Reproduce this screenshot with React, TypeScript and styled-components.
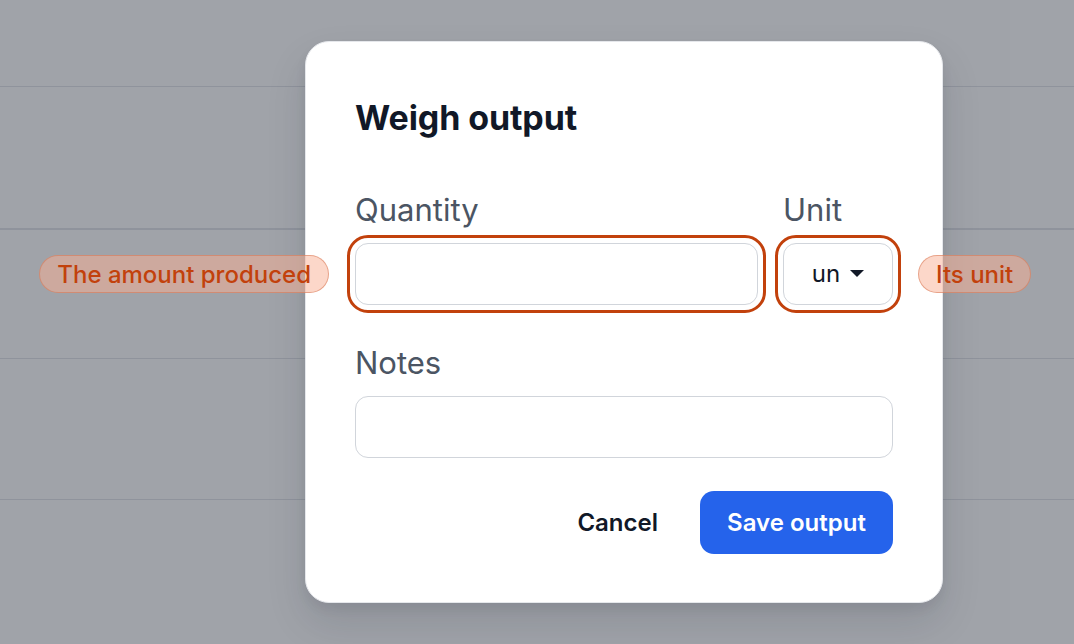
import React from "react";
import styled, { createGlobalStyle } from "styled-components";

const GlobalStyle = createGlobalStyle`
  html, body {
    margin: 0;
    padding: 0;
    background: #ffffff;
  }
  body {
    font-family: Inter, "Noto Sans", sans-serif;
    -webkit-font-smoothing: antialiased;
  }
  * { box-sizing: border-box; }
`;

const Page = styled.div`
  position: relative;
  width: 1074px;
  height: 644px;
  overflow: hidden;
  background: #ffffff;
`;

const BackgroundList = styled.div`
  display: flex;
  flex-direction: column;
`;

const BackgroundRow = styled.div<{ $h: number; $strong?: boolean }>`
  height: ${(p) => p.$h}px;
  border-bottom: ${(p) => (p.$strong ? "2px" : "1px")} solid #e3e5e9;
`;

const Overlay = styled.div`
  position: absolute;
  inset: 0;
  background: rgba(17, 24, 39, 0.4);
  display: flex;
  align-items: center;
  padding-left: 305px;
`;

const Dialog = styled.div`
  width: 638px;
  height: 562px;
  background: #ffffff;
  border: 1px solid #e5e7eb;
  border-radius: 24px;
  box-shadow: 0 20px 40px rgba(17, 24, 39, 0.12), 0 6px 12px rgba(17, 24, 39, 0.06);
  padding: 54px 49px 0;
  display: flex;
  flex-direction: column;
`;

const Title = styled.h2`
  margin: 0;
  font-size: 34px;
  line-height: 44px;
  font-weight: 700;
  color: #111827;
  letter-spacing: -0.1px;
`;

const FieldRow = styled.div`
  display: grid;
  grid-template-columns: 1fr 110px;
  column-gap: 25px;
  margin-top: 53px;
`;

const Field = styled.div`
  display: flex;
  flex-direction: column;
`;

const Label = styled.label`
  font-size: 31px;
  line-height: 34px;
  color: #4b5563;
  font-weight: 400;
  margin-bottom: 16px;
`;

const Anchor = styled.div`
  position: relative;
`;

const TextInput = styled.div<{ $marked?: boolean }>`
  height: 62px;
  width: 100%;
  border: 1.5px solid #d1d5db;
  border-radius: 13px;
  background: #ffffff;
  outline: ${(p) => (p.$marked ? "3px solid #c2410c" : "none")};
  outline-offset: 5px;
`;

const SelectBox = styled(TextInput)`
  display: flex;
  align-items: center;
  justify-content: center;
  gap: 10px;
  font-size: 24px;
  color: #111827;
  padding-bottom: 2px;
`;

const Caret = styled.svg`
  width: 14px;
  height: 8px;
  margin-top: 2px;
`;

const Tag = styled.span<{ $side: "left" | "right" }>`
  position: absolute;
  top: 50%;
  transform: translateY(-50%);
  ${(p) => (p.$side === "left" ? "right: calc(100% + 26px);" : "left: calc(100% + 25px);")}
  height: 38px;
  padding: 0 17px;
  display: flex;
  align-items: center;
  white-space: nowrap;
  border-radius: 19px;
  background: rgba(250, 175, 148, 0.5);
  border: 1.5px solid rgba(214, 110, 72, 0.5);
  color: #c2410c;
  font-size: 24px;
  font-weight: 500;
`;

const NotesField = styled(Field)`
  margin-top: 41px;
`;

const Actions = styled.div`
  display: flex;
  justify-content: flex-end;
  align-items: center;
  gap: 42px;
  margin-top: 33px;
`;

const GhostButton = styled.button`
  border: none;
  background: transparent;
  font-family: inherit;
  font-size: 24px;
  font-weight: 600;
  color: #111827;
  padding: 0;
  cursor: pointer;
`;

const PrimaryButton = styled.button`
  height: 63px;
  width: 193px;
  border: none;
  border-radius: 14px;
  background: #2563eb;
  color: #ffffff;
  font-family: inherit;
  font-size: 24px;
  font-weight: 600;
  cursor: pointer;
`;

export default function App() {
  return (
    <>
      <GlobalStyle />
      <Page>
        <BackgroundList>
          <BackgroundRow $h={87} />
          <BackgroundRow $h={143} $strong />
          <BackgroundRow $h={129} />
          <BackgroundRow $h={141} />
        </BackgroundList>
        <Overlay>
          <Dialog>
            <Title>Weigh output</Title>
            <FieldRow>
              <Field>
                <Label>Quantity</Label>
                <Anchor>
                  <TextInput $marked />
                  <Tag $side="left">The amount produced</Tag>
                </Anchor>
              </Field>
              <Field>
                <Label>Unit</Label>
                <Anchor>
                  <SelectBox $marked>
                    <span>un</span>
                    <Caret viewBox="0 0 14 8">
                      <path d="M0 0 L14 0 L7 7 Z" fill="#111827" />
                    </Caret>
                  </SelectBox>
                  <Tag $side="right">Its unit</Tag>
                </Anchor>
              </Field>
            </FieldRow>
            <NotesField>
              <Label>Notes</Label>
              <TextInput />
            </NotesField>
            <Actions>
              <GhostButton>Cancel</GhostButton>
              <PrimaryButton>Save output</PrimaryButton>
            </Actions>
          </Dialog>
        </Overlay>
      </Page>
    </>
  );
}
